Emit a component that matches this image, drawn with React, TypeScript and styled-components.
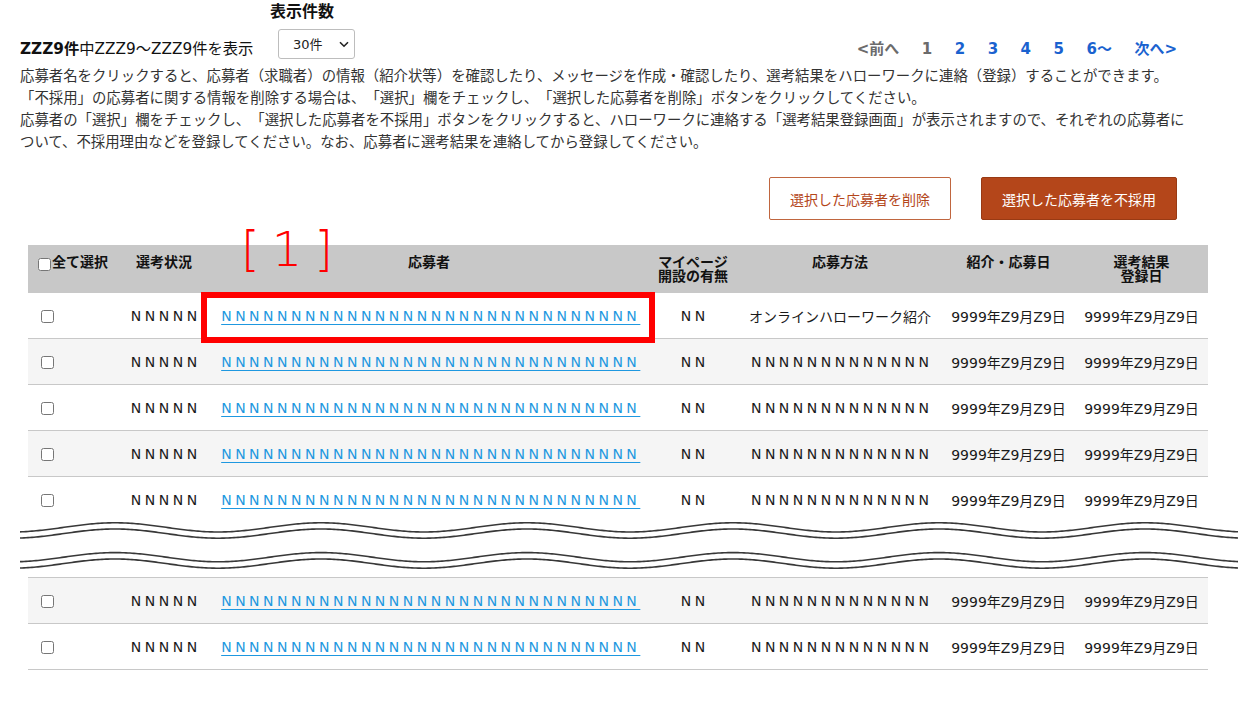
import React from 'react';
import styled, { createGlobalStyle } from 'styled-components';

const FONT = `"DejaVu Sans", "Noto Sans CJK JP", sans-serif`;
const COLS = '90px 92px 438px 90px 204px 133px 133px';

const GlobalStyle = createGlobalStyle`
  html, body { margin: 0; padding: 0; background: #fff; }
  body { font-family: ${FONT}; color: #222; text-spacing-trim: space-all; }
  * { box-sizing: border-box; }
`;

const Page = styled.div`
  position: relative;
  width: 1238px;
  height: 702px;
  overflow: hidden;
  padding: 0 61px 0 20px;
`;

const TopBar = styled.div`
  display: flex;
  align-items: flex-end;
  height: 60px;
`;

const Summary = styled.div`
  width: 250px;
  font-size: 15.3px;
  line-height: 22px;
  color: #111;
  white-space: nowrap;
  b { font-weight: bold; }
`;

const PerPage = styled.div`
  display: flex;
  flex-direction: column;
  align-items: flex-start;
  padding-bottom: 1px;
`;

const PerPageLabel = styled.div`
  font-size: 16px;
  font-weight: bold;
  line-height: 22px;
  margin-bottom: 6px;
  color: #111;
`;

const SelectWrap = styled.div`
  position: relative;
  margin-left: 8px;
  width: 77px;
  height: 30px;
`;

const Select = styled.select`
  appearance: none;
  -webkit-appearance: none;
  width: 100%;
  height: 100%;
  border: 1px solid #bdbdbd;
  border-radius: 3px;
  background: #fff;
  font: 13px ${FONT};
  color: #222;
  padding: 0 0 0 14px;
  outline: none;
`;

const Chevron = styled.svg`
  position: absolute;
  right: 6px;
  top: 12px;
  pointer-events: none;
`;

const Pager = styled.nav`
  margin-left: auto;
  display: flex;
  gap: 22.5px;
  font-size: 15px;
  font-weight: bold;
  line-height: 22px;
`;

const PageItem = styled.span<{ $disabled?: boolean }>`
  color: ${p => (p.$disabled ? '#6b6b6b' : '#1a62cf')};
  cursor: ${p => (p.$disabled ? 'default' : 'pointer')};
`;

const Description = styled.div`
  margin-top: 5px;
  font-size: 14.4px;
  line-height: 22px;
  color: #333;
  white-space: nowrap;
  text-spacing-trim: space-all;
`;

const ButtonRow = styled.div`
  display: flex;
  justify-content: flex-end;
  gap: 30px;
  margin-top: 24px;
`;

const ActionButton = styled.button<{ $primary?: boolean }>`
  height: 43px;
  padding: 0 20px;
  border-radius: 2px;
  font: 14px ${FONT};
  cursor: pointer;
  border: 1px solid ${p => (p.$primary ? '#983a14' : '#c0663f')};
  background: ${p => (p.$primary ? '#b4461a' : '#fff')};
  color: ${p => (p.$primary ? '#fff' : '#b4461a')};
`;

const Table = styled.div`
  margin-top: 25px;
  margin-left: 8px;
  width: 1180px;
`;

const HeadRow = styled.div`
  display: grid;
  grid-template-columns: ${COLS};
  height: 48px;
  background: #c8c8c8;
`;

const HeadCell = styled.div<{ $left?: boolean }>`
  display: flex;
  justify-content: ${p => (p.$left ? 'flex-start' : 'center')};
  align-items: flex-start;
  text-align: center;
  padding-top: 10px;
  padding-left: ${p => (p.$left ? '10px' : '0')};
  font-size: 14px;
  font-weight: bold;
  line-height: 14px;
  color: #111;
  white-space: nowrap;
`;

const HeadCheck = styled.input`
  margin: 3px 1px 0 0;
  width: 13px;
  height: 13px;
`;

const Row = styled.div<{ $alt?: boolean; $noBorder?: boolean; $topBorder?: boolean }>`
  display: grid;
  grid-template-columns: ${COLS};
  height: ${p => 46 + (p.$topBorder ? 1 : 0) - (p.$noBorder ? 1 : 0)}px;
  background: ${p => (p.$alt ? '#f5f5f5' : '#fff')};
  border-bottom: ${p => (p.$noBorder ? 'none' : '1px solid #c8c8c8')};
  border-top: ${p => (p.$topBorder ? '1px solid #c8c8c8' : 'none')};
`;

const Cell = styled.div<{ $left?: boolean }>`
  display: flex;
  align-items: center;
  justify-content: ${p => (p.$left ? 'flex-start' : 'center')};
  padding-left: ${p => (p.$left ? '13px' : '0')};
  font-size: 14px;
  color: #1a1a1a;
  white-space: nowrap;
`;

const RowCheck = styled.input`
  margin: 2px 0 0 0;
  width: 13px;
  height: 13px;
`;

const Spaced = styled.span`
  letter-spacing: 3.5px;
  margin-right: -3.5px;
`;

const NameLink = styled.a`
  color: #1e98e0;
  text-decoration: underline;
  text-underline-offset: 3px;
  letter-spacing: 3.5px;
  margin-right: -3.5px;
  cursor: pointer;
`;

const Break = styled.div`
  height: 55px;
  margin-left: -8px;
  width: calc(100% + 38px);
  svg { display: block; }
`;

const Marker = styled.div`
  position: absolute;
  left: 241px;
  top: 225px;
  font-family: "DejaVu Sans", sans-serif;
  font-weight: 200;
  font-size: 48px;
  line-height: 1;
  color: #f00;
  letter-spacing: 12px;
  pointer-events: none;
`;

const Highlight = styled.div`
  position: absolute;
  left: 201px;
  top: 292px;
  width: 454px;
  height: 51px;
  border: 6px solid #f00;
  pointer-events: none;
`;

function wavePath(base: number, amp: number, width: number, peak: number, lambda: number) {
  let d = '';
  for (let x = 0; x <= width; x += 2) {
    const y = base - amp * Math.cos((2 * Math.PI * (x - peak)) / lambda);
    d += `${x === 0 ? 'M' : 'L'}${x} ${y.toFixed(2)} `;
  }
  return d;
}

const WaveBreak: React.FC = () => {
  const w = 1220;
  const bases = [5.4, 11.6, 35.2, 41.6];
  return (
    <Break>
      <svg width={w} height={55} viewBox={`0 0 ${w} 55`}>
        {bases.map(b => (
          <path key={b} d={wavePath(b, 4.6, w, 95, 206)} fill="none" stroke="#383838" strokeWidth={1.6} />
        ))}
      </svg>
    </Break>
  );
};

const N = (n: number) => 'N'.repeat(n);

type RowData = { method: string | null; alt: boolean };

const before: RowData[] = [
  { method: 'オンラインハローワーク紹介', alt: false },
  { method: null, alt: true },
  { method: null, alt: false },
  { method: null, alt: true },
  { method: null, alt: false },
];
const after: RowData[] = [
  { method: null, alt: true },
  { method: null, alt: false },
];

const DataRow: React.FC<{ data: RowData; noBorder?: boolean; topBorder?: boolean }> = ({ data, noBorder, topBorder }) => (
  <Row $alt={data.alt} $noBorder={noBorder} $topBorder={topBorder}>
    <Cell $left>
      <RowCheck type="checkbox" />
    </Cell>
    <Cell>
      <Spaced>{N(5)}</Spaced>
    </Cell>
    <Cell>
      <NameLink>{N(30)}</NameLink>
    </Cell>
    <Cell>
      <Spaced>{N(2)}</Spaced>
    </Cell>
    <Cell>{data.method ? data.method : <Spaced>{N(13)}</Spaced>}</Cell>
    <Cell>9999年Z9月Z9日</Cell>
    <Cell>9999年Z9月Z9日</Cell>
  </Row>
);

export default function App() {
  return (
    <>
      <GlobalStyle />
      <Page>
        <TopBar>
          <Summary>
            <b>ZZZ9件</b>中ZZZ9〜ZZZ9件を表示
          </Summary>
          <PerPage>
            <PerPageLabel>表示件数</PerPageLabel>
            <SelectWrap>
              <Select defaultValue="30">
                <option value="10">10件</option>
                <option value="30">30件</option>
                <option value="50">50件</option>
              </Select>
              <Chevron width="10" height="7" viewBox="0 0 10 7">
                <path d="M1 1.2 L5 5.2 L9 1.2" fill="none" stroke="#222" strokeWidth="1.6" />
              </Chevron>
            </SelectWrap>
          </PerPage>
          <Pager>
            <PageItem $disabled>&lt;前へ</PageItem>
            <PageItem $disabled>1</PageItem>
            <PageItem>2</PageItem>
            <PageItem>3</PageItem>
            <PageItem>4</PageItem>
            <PageItem>5</PageItem>
            <PageItem>6〜</PageItem>
            <PageItem>次へ&gt;</PageItem>
          </Pager>
        </TopBar>
        <Description>
          応募者名をクリックすると、応募者（求職者）の情報（紹介状等）を確認したり、メッセージを作成・確認したり、選考結果をハローワークに連絡（登録）することができます。
          <br />
          「不採用」の応募者に関する情報を削除する場合は、「選択」欄をチェックし、「選択した応募者を削除」ボタンをクリックしてください。
          <br />
          応募者の「選択」欄をチェックし、「選択した応募者を不採用」ボタンをクリックすると、ハローワークに連絡する「選考結果登録画面」が表示されますので、それぞれの応募者に
          <br />
          ついて、不採用理由などを登録してください。なお、応募者に選考結果を連絡してから登録してください。
        </Description>
        <ButtonRow>
          <ActionButton>選択した応募者を削除</ActionButton>
          <ActionButton $primary>選択した応募者を不採用</ActionButton>
        </ButtonRow>
        <Table>
          <HeadRow>
            <HeadCell $left>
              <HeadCheck type="checkbox" />
              全て選択
            </HeadCell>
            <HeadCell>選考状況</HeadCell>
            <HeadCell>応募者</HeadCell>
            <HeadCell>
              マイページ
              <br />
              開設の有無
            </HeadCell>
            <HeadCell>応募方法</HeadCell>
            <HeadCell>紹介・応募日</HeadCell>
            <HeadCell>
              選考結果
              <br />
              登録日
            </HeadCell>
          </HeadRow>
          {before.map((r, i) => (
            <DataRow key={`b${i}`} data={r} noBorder={i === before.length - 1} />
          ))}
          <WaveBreak />
          {after.map((r, i) => (
            <DataRow key={`a${i}`} data={r} topBorder={i === 0} />
          ))}
        </Table>
        <Marker>[1]</Marker>
        <Highlight />
      </Page>
    </>
  );
}
